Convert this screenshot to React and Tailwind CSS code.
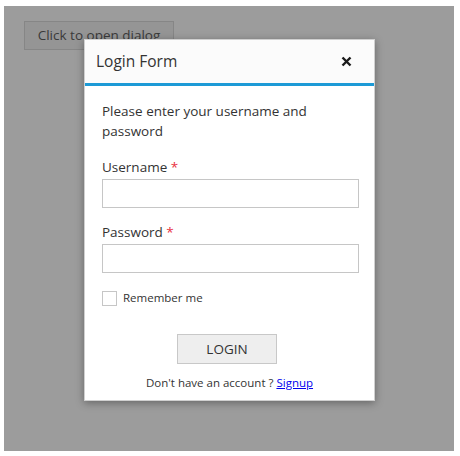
import React from "react";

export default function App() {
  return (
    <div className="w-[460px] h-[456px] bg-white pt-[6px] pl-[4px]" style={{ fontFamily: '"Open Sans", "Noto Sans", sans-serif' }}>
      <div className="relative w-[450px] h-[445px] bg-[#9c9c9c]">
        <div className="pt-[15px] pl-[20px]">
          <button className="w-[150px] h-[29px] bg-[#959595] border border-[#868686] text-[13.5px] text-[#3a3a3a] leading-none">
            Click to open dialog
          </button>
        </div>
        <div className="absolute left-[80px] top-[33px] w-[291px] bg-white shadow-[0_2px_8px_rgba(0,0,0,0.35)] border border-[#d0d0d0]">
          <div className="h-[43px] bg-[#fbfbfb] flex items-center justify-between pl-[11px] pr-[22px]">
            <span className="text-[15.5px] text-[#333]">Login Form</span>
            <svg width="11" height="11" viewBox="0 0 11 11">
              <path d="M1.5 1.5 L9.5 9.5 M9.5 1.5 L1.5 9.5" stroke="#1a1a1a" strokeWidth="2.4" strokeLinecap="butt" />
            </svg>
          </div>
          <div className="h-[3px] bg-[#1c9ad6]" />
          <div className="pl-[17px] pr-[15px] pt-[15px] pb-[9px] text-[#333]">
            <p className="text-[13.5px] leading-[20px]">Please enter your username and password</p>
            <div className="mt-[16px] text-[13.5px] leading-[20px]">
              Username <span className="text-[#e8313f]">*</span>
            </div>
            <input className="mt-[2px] block w-full h-[29px] border border-[#c6c6c6] outline-none" />
            <div className="mt-[14px] text-[13.5px] leading-[20px]">
              Password <span className="text-[#e8313f]">*</span>
            </div>
            <input type="password" className="mt-[2px] block w-full h-[29px] border border-[#c6c6c6] outline-none" />
            <div className="mt-[17px] flex items-center">
              <span className="w-[15px] h-[15px] border border-[#c6c6c6] bg-white" />
              <span className="ml-[6px] text-[11.5px] leading-[16px] text-[#333]">Remember me</span>
            </div>
            <div className="mt-[28px] flex">
              <button className="ml-[75px] w-[100px] h-[30px] bg-[#eeeeee] border border-[#c8c8c8] text-[13.5px] text-[#333]">LOGIN</button>
            </div>
            <p className="mt-[11px] mr-[2px] text-center text-[11.5px] leading-[16px] text-[#333]">
              Don't have an account ? <a href="#" className="text-[#0000ee] underline">Signup</a>
            </p>
          </div>
        </div>
      </div>
    </div>
  );
}
